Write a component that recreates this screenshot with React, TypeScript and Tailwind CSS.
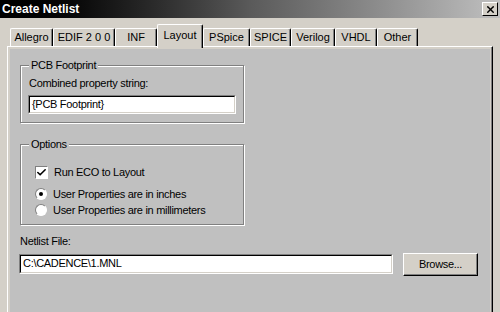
import { Check, X } from 'lucide-react'

const tabs = [
  { label: 'Allegro', w: 'w-[43px]' },
  { label: 'EDIF 2 0 0', w: 'w-[62px]' },
  { label: 'INF', w: 'w-[42px]' },
  { label: 'Layout', w: 'w-[46px]', active: true },
  { label: 'PSpice', w: 'w-[47px]' },
  { label: 'SPICE', w: 'w-[41px]' },
  { label: 'Verilog', w: 'w-[44px]' },
  { label: 'VHDL', w: 'w-[42px]' },
  { label: 'Other', w: 'w-[41px]' },
]

const font = "font-['Liberation_Sans',Arial,sans-serif]"

function GroupBox({ title, className, children }: { title: string; className: string; children: React.ReactNode }) {
  return (
    <div
      className={[
        'relative border border-[#808080] shadow-[inset_1px_1px_0_#fff,1px_1px_0_#fff]',
        className,
      ].join(' ')}
    >
      <span className="absolute -top-[8px] left-[8px] bg-[#c0c0c0] px-[2px] leading-[14px]">{title}</span>
      {children}
    </div>
  )
}

function TextBox({ value, className }: { value: string; className: string }) {
  return (
    <div
      className={[
        'border-t border-l border-[#808080] border-r border-b border-r-white border-b-white bg-white',
        className,
      ].join(' ')}
    >
      <div className="h-full border-t border-l border-black border-r border-b border-r-[#d4d0c8] border-b-[#d4d0c8] pl-[2px] leading-[15px]">
        {value}
      </div>
    </div>
  )
}

function Radio({ checked, label }: { checked?: boolean; label: string }) {
  return (
    <div className="flex h-[16px] items-center gap-[6px]">
      <span className="flex h-[12px] w-[12px] items-center justify-center rounded-full border border-t-[#808080] border-l-[#808080] border-r-white border-b-white bg-white">
        {checked && <span className="h-[4px] w-[4px] rounded-full bg-black" />}
      </span>
      <span>{label}</span>
    </div>
  )
}

export default function App() {
  return (
    <div className={`flex h-[312px] w-[500px] flex-col overflow-hidden bg-[#d4d0c8] text-[11px] text-black ${font}`}>
      <div className="flex h-[18px] shrink-0 items-center justify-between bg-gradient-to-r from-black via-[#5a5a5a] to-[#c0c0c0] pl-[2px] pr-[2px]">
        <span className="text-[12px] font-bold leading-none text-white">Create Netlist</span>
        <button
          type="button"
          className="flex h-[14px] w-[16px] items-center justify-center border border-t-white border-l-white border-r-black border-b-black bg-[#d4d0c8]"
        >
          <X size={11} strokeWidth={3} />
        </button>
      </div>

      <div className="flex h-[28px] shrink-0 items-end pl-[10px]">
        {tabs.map((tab) =>
          tab.active ? (
            <div
              key={tab.label}
              className={`relative z-10 -mb-[2px] flex h-[24px] ${tab.w} items-start justify-center rounded-t-[2px] border-t border-l border-white border-r border-r-black bg-[#d4d0c8] pt-[2px] shadow-[inset_-1px_0_0_#808080]`}
            >
              {tab.label}
            </div>
          ) : (
            <div
              key={tab.label}
              className={`flex h-[18px] ${tab.w} items-center justify-center rounded-t-[2px] border-t border-l border-white border-r border-r-black bg-[#d4d0c8] shadow-[inset_-1px_0_0_#808080]`}
            >
              {tab.label}
            </div>
          ),
        )}
      </div>

      <div className="ml-[7px] flex w-[486px] flex-1 flex-col border-t border-l border-white border-r border-r-black bg-[#d4d0c8] pt-[2px] pl-[2px] pr-[2px] shadow-[inset_-1px_0_0_#808080]">
        <div className="flex flex-1 flex-col bg-[#c0c0c0] pl-[10px] tracking-[-0.3px]">
          <GroupBox title="PCB Footprint" className="mt-[16px] h-[58px] w-[224px] pl-[8px] pt-[10px]">
            <div className="leading-[14px]">Combined property string:</div>
            <TextBox value="{PCB Footprint}" className="mt-[5px] h-[19px] w-[208px] -ml-[1px]" />
          </GroupBox>

          <GroupBox title="Options" className="mt-[21px] h-[81px] w-[224px] pl-[14px] pt-[20px]">
            <div className="flex h-[14px] items-center gap-[6px]">
              <span className="flex h-[13px] w-[13px] items-center justify-center border border-t-[#808080] border-l-[#808080] border-r-white border-b-white bg-white">
                <Check size={11} strokeWidth={3.5} />
              </span>
              <span>Run ECO to Layout</span>
            </div>
            <div className="mt-[7px]">
              <Radio checked label="User Properties are in inches" />
              <Radio label="User Properties are in millimeters" />
            </div>
          </GroupBox>

          <div className="mt-[9px] leading-[14px]">Netlist File:</div>
          <div className="mt-[5px] flex items-start">
            <TextBox value="C:\CADENCE\1.MNL" className="-ml-[1px] mt-[1px] h-[20px] w-[374px]" />
            <button
              type="button"
              className="ml-[10px] h-[23px] w-[75px] border border-t-white border-l-white border-r-black border-b-black bg-[#d4d0c8] shadow-[inset_-1px_-1px_0_#808080]"
            >
              Browse...
            </button>
          </div>
        </div>
      </div>
    </div>
  )
}
